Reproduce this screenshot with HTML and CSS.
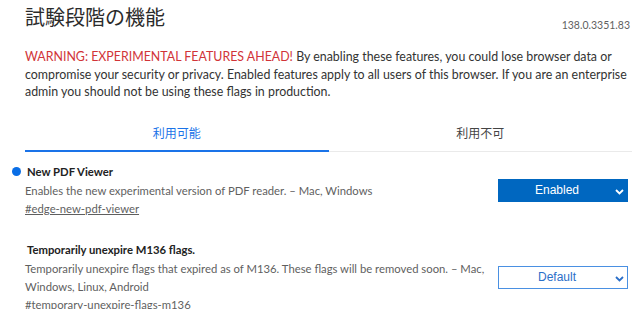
FILE: index.html
```html
<!DOCTYPE html>
<html lang="ja">
<head>
    <meta charset="UTF-8">
    <meta name="viewport" content="width=device-width, initial-scale=1.0">
    <title>試験段階の機能</title>
    <link rel="stylesheet" href="styles.css">
</head>
<body>

<div class="page">
    <div class="header">
        <h1>試験段階の機能</h1>
        <span class="version">138.0.3351.83</span>
    </div>

    <p class="warning-text"><span class="warning">WARNING: EXPERIMENTAL FEATURES AHEAD!</span> By enabling these features, you could lose browser data or compromise your security or privacy. Enabled features apply to all users of this browser. If you are an enterprise admin you should not be using these flags in production.</p>

    <div class="tabs">
        <div class="tab active">利用可能</div>
        <div class="tab">利用不可</div>
    </div>

    <div class="flag modified">
        <div class="flag-info">
            <h3 class="flag-name">New PDF Viewer</h3>
            <p class="flag-desc">Enables the new experimental version of PDF reader. – Mac, Windows</p>
            <a class="flag-link" href="#edge-new-pdf-viewer">#edge-new-pdf-viewer</a>
        </div>
        <div class="select enabled">
            <span>Enabled</span>
            <svg class="chevron" width="9" height="6" viewBox="0 0 9 6"><path d="M1 1l3.5 3.5 3.5-3.5" fill="none" stroke="currentColor" stroke-width="1.8"/></svg>
        </div>
    </div>

    <div class="flag">
        <div class="flag-info">
            <h3 class="flag-name">Temporarily unexpire M136 flags.</h3>
            <p class="flag-desc">Temporarily unexpire flags that expired as of M136. These flags will be removed soon. – Mac, Windows, Linux, Android</p>
            <a class="flag-link" href="#temporary-unexpire-flags-m136">#temporary-unexpire-flags-m136</a>
        </div>
        <div class="select">
            <span>Default</span>
            <svg class="chevron" width="9" height="6" viewBox="0 0 9 6"><path d="M1 1l3.5 3.5 3.5-3.5" fill="none" stroke="currentColor" stroke-width="1.8"/></svg>
        </div>
    </div>
</div>

</body>
</html>
```

FILE: styles.css
```css
body {
    font-family: Lato, "Noto Sans CJK JP", sans-serif;
    background-color: #fff;
    color: #333;
    margin: 0;
}
.page {
    padding: 0 8px 0 25px;
}
.header {
    display: flex;
    justify-content: space-between;
    align-items: flex-start;
    height: 32px;
}
h1 {
    font-family: "Noto Sans CJK JP", sans-serif;
    font-size: 20px;
    font-weight: 400;
    line-height: 30px;
    margin: 2px 0 0;
    color: #2b2b2b;
}
.version {
    align-self: flex-end;
    font-size: 10.5px;
    color: #5f5f5f;
    line-height: 14px;
    margin-right: 2px;
}
.warning-text {
    font-size: 12.4px;
    line-height: 17.5px;
    margin: 16px 0 0;
    color: #333;
}
.warning {
    color: #d13438;
}
.tabs {
    display: flex;
    margin-top: 14px;
    border-bottom: 1px solid #eaeaea;
}
.tab {
    flex: 1;
    text-align: center;
    font-family: "Noto Sans CJK JP", sans-serif;
    font-size: 12px;
    color: #444;
    padding: 9px 0 9px;
}
.tab.active {
    color: #1a73e8;
    border-bottom: 2px solid #1a73e8;
    margin-bottom: -1px;
}
.flag {
    display: flex;
    justify-content: space-between;
    align-items: center;
    position: relative;
    margin-top: 11px;
}
.flag + .flag {
    margin-top: 23px;
}
.flag.modified::before {
    content: "";
    position: absolute;
    left: -13px;
    top: 4px;
    width: 9px;
    height: 9px;
    border-radius: 50%;
    background-color: #0a6ee6;
}
.flag-info {
    flex: 1;
    padding-right: 9px;
    font-size: 11.3px;
    line-height: 18px;
}
.flag-name {
    font-size: 11.3px;
    font-weight: 700;
    margin: 0 0 0 2px;
    line-height: 18px;
    color: #222;
}
.flag-desc {
    margin: 1px 0 0;
    color: #5f5f5f;
}
.flag-link {
    color: #5f5f5f;
}
.select {
    flex: 0 0 130px;
    box-sizing: border-box;
    height: 23px;
    margin: 0 4px 0 0;
    padding-right: 12px;
    display: flex;
    align-items: center;
    justify-content: center;
    position: relative;
    font-family: "Liberation Sans", Arial, sans-serif;
    font-size: 12px;
    border: 1px solid #4a90e2;
    color: #2b6fc9;
    background-color: #fff;
}
.select.enabled {
    background-color: #0067c0;
    border-color: #0067c0;
    color: #fff;
}
.chevron {
    position: absolute;
    right: 3px;
    top: 9px;
}
```
